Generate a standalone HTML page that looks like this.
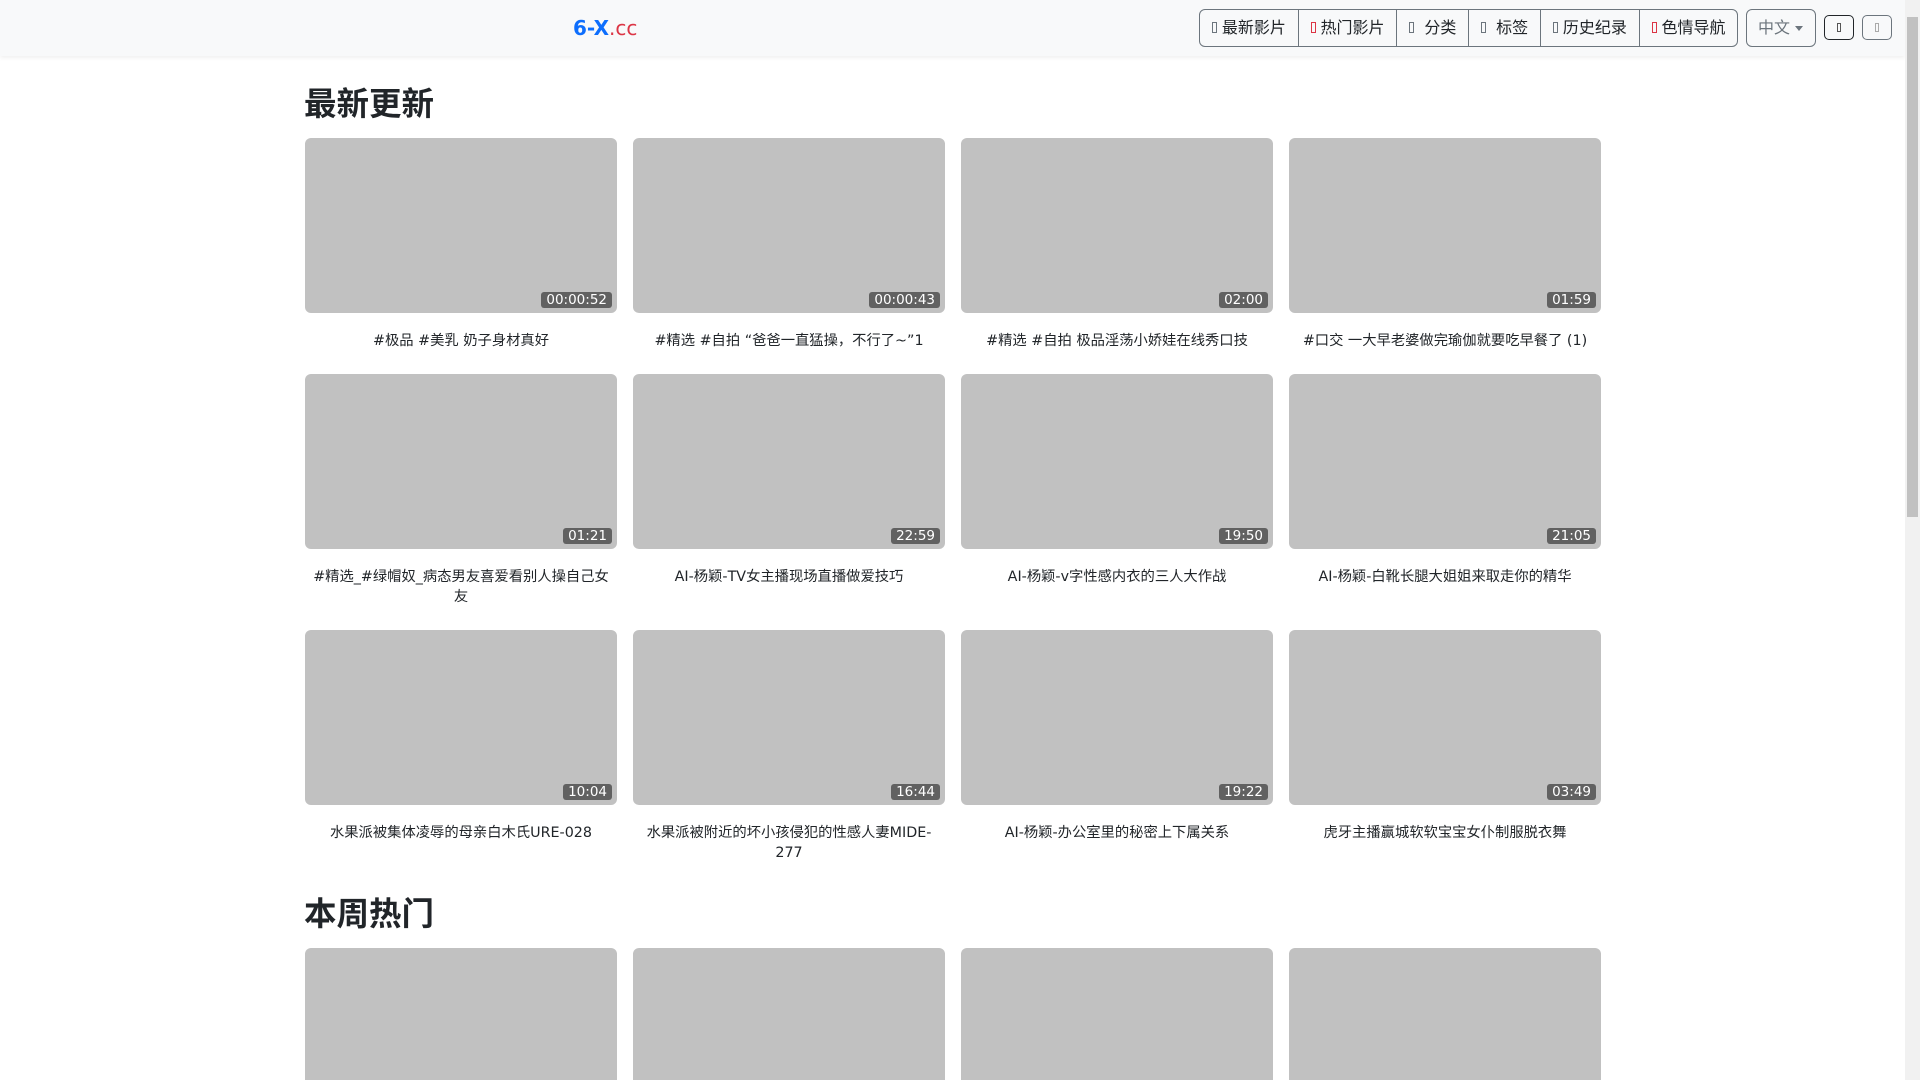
<!DOCTYPE html>
<html><head><meta charset="utf-8"><style>
*{box-sizing:border-box;margin:0;padding:0}
html,body{width:1920px;height:1080px;overflow:hidden;background:#fff}
body{font-family:"DejaVu Sans","Liberation Sans","Noto Sans CJK SC",sans-serif;color:#212529;position:relative}
.hdr{position:absolute;left:0;top:0;width:1905px;height:56px;background:#f8f9fa;box-shadow:0 2px 4px rgba(0,0,0,.06)}
.logo{position:absolute;left:573px;top:14px;font-size:20px;font-weight:bold;color:#0d6efd;line-height:28px}
.logo span{color:#dc3545;font-weight:normal}
.grp{position:absolute;left:1199px;top:9px;height:38px;display:flex;border:1px solid #6c757d;border-radius:6px;overflow:hidden}
.grp div{padding:0 11.85px;font-size:16px;line-height:36px;border-left:1px solid #6c757d;white-space:nowrap;color:#212529}
.grp div:first-child{border-left:none}
.ic{display:inline-block;width:5px;height:11px;border:1px solid #6c757d;margin-right:5px;vertical-align:0}
.ic.r{border-color:#dc3545}
.lang{position:absolute;left:1746px;top:9px;width:70px;height:38px;border:1px solid #6c757d;border-radius:6px;color:#6c757d;font-size:16px;line-height:36px;padding-left:11px}
.lang:after{content:"";position:absolute;right:12px;top:16px;border:4px solid transparent;border-top:5px solid #6c757d}
.sb{position:absolute;top:15px;width:30px;height:25px;border:1px solid #212529;border-radius:5px}
.sb i{position:absolute;left:12px;top:7px;width:4px;height:9px;border:1px solid #555}
.scroll{position:absolute;left:1905px;top:0;width:15px;height:1080px;background:#f1f1f1}
.scroll div{position:absolute;left:2px;top:17px;width:11px;height:500px;background:#c1c1c1}
h2{position:absolute;left:304px;font-size:32.5px;font-weight:bold;line-height:44px;font-family:"Noto Sans CJK SC",sans-serif;color:#212529}
.card{position:absolute;width:312px}
.th{height:175px;background:#c1c1c1;border-radius:6px;position:relative}
.d{position:absolute;right:5px;bottom:5px;background:#616161;color:#fff;font-size:13.5px;line-height:16px;padding:0 5px;border-radius:3px}
.t{margin-top:18px;text-align:center;font-size:14.3px;line-height:20px;padding:0 6px}
</style></head><body>
<div class="hdr">
<div class="logo">6-X<span>.cc</span></div>
<div class="grp"><div><i class="ic"></i>最新影片</div><div><i class="ic r"></i>热门影片</div><div><i class="ic"></i> 分类</div><div><i class="ic"></i> 标签</div><div><i class="ic"></i>历史纪录</div><div><i class="ic r"></i>色情导航</div></div>
<div class="lang">中文</div>
<div class="sb" style="left:1824px"><i></i></div>
<div class="sb" style="left:1862px;border-color:#6c757d"><i style="border-color:#aaa"></i></div>
</div>
<div class="scroll"><div></div></div>

<h2 style="top:80px">最新更新</h2>
<div class="card" style="left:305px;top:138px"><div class="th"><span class="d">00:00:52</span></div><div class="t">#极品 #美乳 奶子身材真好</div></div>
<div class="card" style="left:633px;top:138px"><div class="th"><span class="d">00:00:43</span></div><div class="t">#精选 #自拍 “爸爸一直猛操，不行了~”1</div></div>
<div class="card" style="left:961px;top:138px"><div class="th"><span class="d">02:00</span></div><div class="t">#精选 #自拍 极品淫荡小娇娃在线秀口技</div></div>
<div class="card" style="left:1289px;top:138px"><div class="th"><span class="d">01:59</span></div><div class="t">#口交 一大早老婆做完瑜伽就要吃早餐了 (1)</div></div>

<div class="card" style="left:305px;top:374px"><div class="th"><span class="d">01:21</span></div><div class="t">#精选_#绿帽奴_病态男友喜爱看别人操自己女友</div></div>
<div class="card" style="left:633px;top:374px"><div class="th"><span class="d">22:59</span></div><div class="t">AI-杨颖-TV女主播现场直播做爱技巧</div></div>
<div class="card" style="left:961px;top:374px"><div class="th"><span class="d">19:50</span></div><div class="t">AI-杨颖-v字性感内衣的三人大作战</div></div>
<div class="card" style="left:1289px;top:374px"><div class="th"><span class="d">21:05</span></div><div class="t">AI-杨颖-白靴长腿大姐姐来取走你的精华</div></div>

<div class="card" style="left:305px;top:630px"><div class="th"><span class="d">10:04</span></div><div class="t">水果派被集体凌辱的母亲白木氏URE-028</div></div>
<div class="card" style="left:633px;top:630px"><div class="th"><span class="d">16:44</span></div><div class="t">水果派被附近的坏小孩侵犯的性感人妻MIDE-277</div></div>
<div class="card" style="left:961px;top:630px"><div class="th"><span class="d">19:22</span></div><div class="t">AI-杨颖-办公室里的秘密上下属关系</div></div>
<div class="card" style="left:1289px;top:630px"><div class="th"><span class="d">03:49</span></div><div class="t">虎牙主播赢城软软宝宝女仆制服脱衣舞</div></div>

<h2 style="top:890px">本周热门</h2>
<div class="card" style="left:305px;top:948px"><div class="th"></div></div>
<div class="card" style="left:633px;top:948px"><div class="th"></div></div>
<div class="card" style="left:961px;top:948px"><div class="th"></div></div>
<div class="card" style="left:1289px;top:948px"><div class="th"></div></div>
</body></html>
